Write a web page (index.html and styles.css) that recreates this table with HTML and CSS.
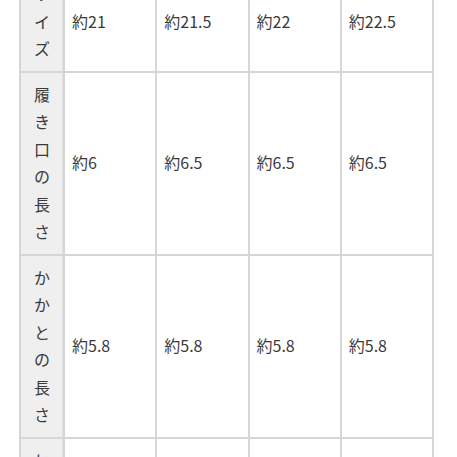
FILE: index.html
```html
<!DOCTYPE html>
<html lang="ja">
<head>
<meta charset="utf-8">
<link rel="stylesheet" href="styles.css">
</head>
<body>
<table class="size-table">
  <colgroup>
    <col class="col-head">
    <col class="col-data">
    <col class="col-data">
    <col class="col-data">
    <col class="col-data">
  </colgroup>
  <tbody>
    <tr>
      <th class="head">サイズ</th>
      <td class="cell">約21</td>
      <td class="cell">約21.5</td>
      <td class="cell">約22</td>
      <td class="cell">約22.5</td>
    </tr>
    <tr>
      <th class="head">履き口の長さ</th>
      <td class="cell">約6</td>
      <td class="cell">約6.5</td>
      <td class="cell">約6.5</td>
      <td class="cell">約6.5</td>
    </tr>
    <tr>
      <th class="head">かかとの長さ</th>
      <td class="cell">約5.8</td>
      <td class="cell">約5.8</td>
      <td class="cell">約5.8</td>
      <td class="cell">約5.8</td>
    </tr>
    <tr>
      <th class="head">ヒール高さ</th>
      <td class="cell">約1.5</td>
      <td class="cell">約1.5</td>
      <td class="cell">約1.5</td>
      <td class="cell">約1.5</td>
    </tr>
  </tbody>
</table>
</body>
</html>
```

FILE: styles.css
```css
html, body {
  margin: 0;
  padding: 0;
  background: #ffffff;
  overflow: hidden;
}

body {
  font-family: "Noto Sans CJK JP", "Noto Sans", sans-serif;
  color: #3a3a3a;
}

.size-table {
  margin: -30px 0 0 19px;
  width: 413px;
  table-layout: fixed;
  border-collapse: collapse;
  font-size: 16px;
  line-height: 27.5px;
}

.col-head {
  width: 44px;
}

.col-data {
  width: 92.25px;
}

.head,
.cell {
  border: 2px solid #d6d6d6;
  padding: 8px;
  vertical-align: middle;
}

.head {
  background: #efefef;
  font-weight: normal;
  text-align: center;
  padding: 8px 11px;
  word-break: break-all;
  box-shadow: inset -1px 0 0 #e0e0e0;
}

.cell {
  text-align: left;
  padding-left: 7px;
  white-space: nowrap;
}
```
